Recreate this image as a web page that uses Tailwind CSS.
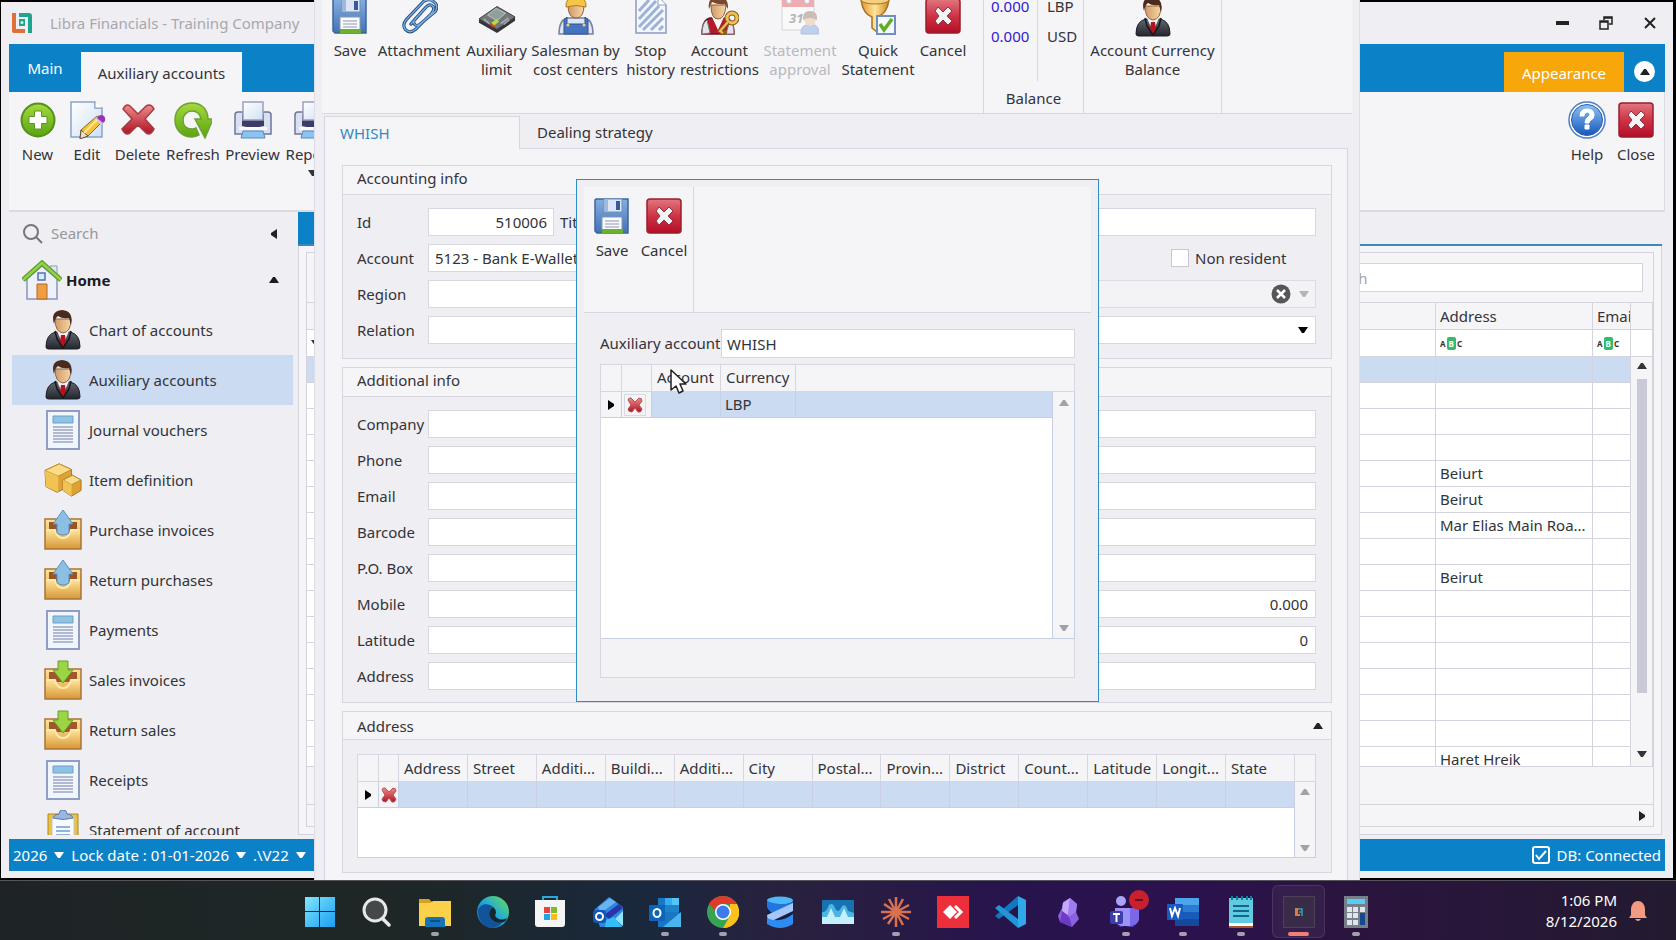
<!DOCTYPE html>
<html lang="en">
<head>
<meta charset="utf-8">
<title>Libra Financials - Training Company</title>
<script src="https://cdn.jsdelivr.net/npm/@tailwindcss/browser@4"></script>
</head>
<body class="h-screen overflow-hidden flex flex-col bg-black text-[15px] leading-[19px] text-[#333338] font-['Noto_Sans','Open_Sans',sans-serif]">

<!-- shared icon library -->
<svg class="absolute w-0 h-0" aria-hidden="true">
  <defs>
    <linearGradient id="gGreen" x1="0" y1="0" x2="0" y2="1"><stop offset="0" stop-color="#a5da3c"/><stop offset="1" stop-color="#5aa312"/></linearGradient>
    <linearGradient id="gRed" x1="0" y1="0" x2="0" y2="1"><stop offset="0" stop-color="#e0787f"/><stop offset=".5" stop-color="#cf3344"/><stop offset="1" stop-color="#b30d27"/></linearGradient>
    <linearGradient id="gX" x1="0" y1="0" x2="0" y2="1"><stop offset="0" stop-color="#f08a88"/><stop offset="1" stop-color="#ad1426"/></linearGradient>
    <linearGradient id="gBlue" x1="0" y1="0" x2="0" y2="1"><stop offset="0" stop-color="#85aee0"/><stop offset="1" stop-color="#4273b5"/></linearGradient>
    <linearGradient id="gPage" x1="0" y1="0" x2="1" y2="1"><stop offset="0" stop-color="#ffffff"/><stop offset="1" stop-color="#cfe0f4"/></linearGradient>
    <linearGradient id="gBox" x1="0" y1="0" x2="0" y2="1"><stop offset="0" stop-color="#ffe49a"/><stop offset="1" stop-color="#d99a3a"/></linearGradient>
    <linearGradient id="gSuit" x1="0" y1="0" x2="0" y2="1"><stop offset="0" stop-color="#62666f"/><stop offset="1" stop-color="#22252c"/></linearGradient>
    <linearGradient id="gSkin" x1="0" y1="0" x2="1" y2="0"><stop offset="0" stop-color="#cf9a68"/><stop offset="1" stop-color="#f8d6a6"/></linearGradient>
    <linearGradient id="gHelp" x1="0" y1="0" x2="0" y2="1"><stop offset="0" stop-color="#8fc2f2"/><stop offset="1" stop-color="#1458bd"/></linearGradient>
    <linearGradient id="gGold" x1="0" y1="0" x2="1" y2="0"><stop offset="0" stop-color="#e09a2e"/><stop offset=".5" stop-color="#ffe39a"/><stop offset="1" stop-color="#d08a20"/></linearGradient>
    <linearGradient id="gWin" x1="0" y1="0" x2="1" y2="1"><stop offset="0" stop-color="#7fe6ff"/><stop offset="1" stop-color="#1a9df0"/></linearGradient>
    <linearGradient id="gEdge" x1="0" y1="1" x2="1" y2="0"><stop offset="0" stop-color="#0c59a4"/><stop offset=".5" stop-color="#1fa8dc"/><stop offset="1" stop-color="#6be04e"/></linearGradient>
  </defs>
  <symbol id="up" viewBox="0 0 10 6"><path d="M0 6 4 0h2l4 6z" fill="currentColor"/></symbol>
  <symbol id="down" viewBox="0 0 10 6"><path d="M0 0h10L6 6H4z" fill="currentColor"/></symbol>
  <symbol id="left" viewBox="0 0 6 10"><path d="M6 0v10L0 6V4z" fill="currentColor"/></symbol>
  <symbol id="right" viewBox="0 0 6 10"><path d="M0 0v10l6-4V4z" fill="currentColor"/></symbol>
  <symbol id="logo" viewBox="0 0 22 22"><path d="M1 1h4v16h9v4H3q-2 0-2-2z" fill="#e0703a"/><path d="M8 1h10q3 0 3 3v17h-4V5H8z" fill="#1fa58e"/><path d="M8 7h6v7H8z" fill="#1fa58e"/><circle cx="11" cy="10.500" r="1.500" fill="#d9f0ec"/></symbol>
  <symbol id="new" viewBox="0 0 38 38"><circle cx="19" cy="19" r="16.500" fill="url(#gGreen)" stroke="#558f1c" stroke-width="2"/><path d="M15.500 10h7v5.500H28v7h-5.500V28h-7v-5.500H10v-7h5.500z" fill="#fff" stroke="#5c962a"/></symbol>
  <symbol id="edit" viewBox="0 0 38 38"><path d="M3 1h24v6h7v29H3z" fill="url(#gPage)" stroke="#8aa3c6" stroke-width="1.500"/><path d="M27 1v6h7" fill="#fff" stroke="#8aa3c6"/><path d="m12 37 1-8L29 15l6 5-15 15z" fill="#f5c33b" stroke="#8a6a28"/><path d="m13 29 7 6-8 3z" fill="#f2dcc0" stroke="#58504a"/><path d="m26 18 5-4 6 6-4 4z" fill="#c8cad8"/><path d="m30 15 3-1q5 0 4 6l-2 2-6-5z" fill="#9a32b8"/><path d="m16 32 13-13" stroke="#ffe89a" stroke-width="2"/></symbol>
  <symbol id="delete" viewBox="0 0 38 38"><path d="M4 8q3-6 7-3l8 8 8-8q5-3 8 3l-9 10 9 10q-3 7-8 4l-8-8-8 8q-5 3-8-4l10-10z" fill="url(#gX)" stroke="#a63a44" stroke-width="1.500"/></symbol>
  <symbol id="refresh" viewBox="0 0 38 38"><path d="M18 2C8 2 1 9 1 19s7 17 17 17q4 0 7-2l-3-7q-2 1-4 1c-6 0-9-4-9-9s4-9 9-9 8 3 9 8h-6l10 19 8-19h-5C34 8 27 2 18 2z" fill="url(#gGreen)" stroke="#6f9f35" stroke-width="1.500"/></symbol>
  <symbol id="printer" viewBox="0 0 38 38"><path d="M1 14q0-3 3-3h5v8h20v-8h5q3 0 3 3v19H1z" fill="#dbe0f1" stroke="#6e7699" stroke-width="1.500"/><path d="M8 14h22v11q-11 3-22 0z" fill="#3d3b67"/><path d="M9 1h20v18H9z" fill="url(#gPage)" stroke="#9b9fc0" stroke-width="1.500"/><path d="M5 26h28v3H5z" fill="#f8f9ff"/><path d="M9 30h20l2 7H7z" fill="#8bc4ee" stroke="#5f88bb"/></symbol>
  <symbol id="close" viewBox="0 0 38 38"><rect x="2" y="2" width="34" height="34" rx="3" fill="url(#gRed)" stroke="#9c1d2c" stroke-width="1.500"/><path d="m11 14 3-4 5 5 5-5 4 4-5 5 5 5-4 4-5-5-5 5-3-4 4-5z" fill="#f4f4f6" stroke="#8b3340" stroke-linejoin="round"/></symbol>
  <symbol id="help" viewBox="0 0 38 38"><circle cx="19" cy="19" r="18" fill="#fff" stroke="#4f7fc0" stroke-width="1.500"/><circle cx="19" cy="19" r="15.500" fill="url(#gHelp)" stroke="#2a62b0"/><path d="M12 15q0-7 7-7t7 6q0 4-3 5-2 1-2 3h-4q0-4 3-6 2-1 2-2 0-3-3-3-3 1-3 4zM17 24h4v4h-4z" fill="#fff" stroke="#fff"/></symbol>
  <symbol id="save" viewBox="0 0 38 38"><path d="M3 2h32v34H4l-2-2V3z" fill="url(#gBlue)" stroke="#3d659c" stroke-width="1.500"/><path d="M11 2h18v13H11z" fill="#dce5f3" stroke="#6f8fbe"/><path d="M23 4h4v9h-4z" fill="#38599c"/><path d="M11 3h4v11h-4z" fill="#9fb8de"/><path d="M9 20h20v13H9z" fill="#fafbff" stroke="#8296bb"/><path d="M12 24h14M12 27h14M12 30h14" stroke="#8c93ad"/><path d="M9 32h21v4H9z" fill="#6bb02f"/></symbol>
  <symbol id="clip" viewBox="0 0 42 38"><g fill="none" stroke-linecap="round"><path d="M12 28 29 9q4-4 7-1t-1 8L17 34q-6 5-11 0-4-5 1-11L26 3q6-4 11 0 6 4 2 11L22 28q-4 3-6 0-2-3 1-6L28 10" stroke="#27507f" stroke-width="3.500"/><path d="M12 28 29 9q4-4 7-1t-1 8L17 34q-6 5-11 0-4-5 1-11L26 3q6-4 11 0 6 4 2 11L22 28q-4 3-6 0-2-3 1-6L28 10" stroke="#79ace0" stroke-width="1.500"/></g></symbol>
  <symbol id="terminal" viewBox="0 0 40 38"><path d="M1 23 20 9l19 11v4L20 37 1 26z" fill="#34363a"/><path d="M1 22 20 9l19 11-19 13z" fill="#73767a" stroke="#44474b"/><path d="m10 18 9-7 10 5-9 8z" fill="#8fa09a" stroke="#bfc4bf"/><path d="m14 26 6-4 2 3-5 4z" fill="#aee03c"/><path d="m14 27 4 3-2 1-4-3z" fill="#e23c2c"/><path d="m6 22 6 5M24 27l8-6M27 28l6-5" stroke="#a9adb0" stroke-width="1.500"/></symbol>
  <symbol id="worker" viewBox="0 0 38 38"><path d="M2 37q0-14 8-16h18q8 2 8 16z" fill="#dfe5f1" stroke="#78839c" stroke-width="1.500"/><path d="M10 20v7h18v-7l3 3v14H7V23z" fill="#4674c0" stroke="#2f5598"/><circle cx="11" cy="28" r="1.500" fill="#f0d468"/><circle cx="27" cy="28" r="1.500" fill="#f0d468"/><path d="M11 8q0 13 8 13t8-13z" fill="url(#gSkin)" stroke="#8c5f3c"/><path d="M9 10q-1-10 10-10t10 10q-10-3-20 0z" fill="#f6c545" stroke="#b07e1d"/></symbol>
  <symbol id="page" viewBox="0 0 38 38"><path d="M4 0h22l8 8v28H4z" fill="#f4f7fd" stroke="#8d9bc0" stroke-width="1.500"/><path d="M7 14 17 3M7 22 24 4M7 30 27 9M11 33 31 13M19 33l12-12M27 33l4-4" stroke="#9db2d6" stroke-width="3"/><path d="M26 0v8h8" fill="#fff" stroke="#8d9bc0"/></symbol>
  <symbol id="keyman" viewBox="0 0 38 38"><path d="M1 37q0-14 8-16h16q8 2 8 16z" fill="#b4182b" stroke="#6c1420" stroke-width="1.500"/><path d="m11 20 6 13 6-13z" fill="#f7f4f4"/><path d="M1 37q0-11 5-14l3 13zM29 23q4 4 4 14h-8z" fill="#e4e4ea" stroke="#77777f"/><path d="M10 8q0 14 7 14t8-14z" fill="url(#gSkin)" stroke="#8c5f3c"/><path d="M8 12Q6 0 17-1q11 1 10 13l-3-5q-7 1-13-2z" fill="#7c472a"/><circle cx="31" cy="21" r="5" fill="none" stroke="#8b5d18" stroke-width="5"/><circle cx="31" cy="21" r="5" fill="none" stroke="#efc05a" stroke-width="3"/><path d="m27 25-8 9 3 3 3-3" fill="none" stroke="#8b5d18" stroke-width="4"/><path d="m27 25-8 9 3 2" fill="none" stroke="#efc05a" stroke-width="2"/></symbol>
  <symbol id="approve" viewBox="0 0 38 38"><g opacity=".4"><path d="M1 2h32v31H1z" fill="#fff" stroke="#a7a8b2"/><path d="M1 1h32v9H1z" fill="#e0404c"/><circle cx="8" cy="4" r="2.500" fill="#fff" stroke="#888"/><circle cx="26" cy="4" r="2.500" fill="#fff" stroke="#888"/><path d="M20 37q0-8 5-9h8q5 1 5 9z" fill="#6f9be0" stroke="#4f6fa8"/><path d="M23 20q0 9 6 9t6-9z" fill="#e8b888"/><path d="M22 23q-1-9 7-9t7 9q-7-4-14 0z" fill="#8f6b52"/></g><text x="8" y="26" font-size="13" font-style="italic" font-weight="700" fill="#b3b3bb">31</text></symbol>
  <symbol id="funnel" viewBox="0 0 38 38"><path d="M2 3q2 14 11 17v11l5 4V20Q28 17 30 3z" fill="url(#gGold)" stroke="#a87020" stroke-width="1.500"/><ellipse cx="16" cy="3" rx="14" ry="4" fill="#f5cf80" stroke="#a87020"/><path d="M18 19h18v18H18z" fill="#f5f8fd" stroke="#6f8fc2" stroke-width="2"/><path d="m21 27 4 6 8-11" fill="none" stroke="#5caf1f" stroke-width="3.500"/></symbol>
  <symbol id="man" viewBox="0 0 38 40"><path d="M2 37q0-13 10-15h14q10 2 10 15 0 2-3 2H5q-3 0-3-2z" fill="url(#gSuit)" stroke="#1c1e24"/><path d="m13 21 6 14 6-14z" fill="#f2f2f6"/><path d="m17 25h4l1 7-3 6-3-6z" fill="#b5121f"/><path d="m11 21 2 8 6 9M27 21l-2 8-6 9" stroke="#15171b" fill="none" stroke-width="1.500"/><path d="M11 9q0 13 8 14 8-1 8-14z" fill="url(#gSkin)" stroke="#94663f"/><path d="M10 14Q6 1 18 0q12 1 9 15l-2-7q-7 1-11-2-3 2-4 8z" fill="#4a2a1b"/></symbol>
  <symbol id="home" viewBox="0 0 40 40"><path d="M28 6h7v12h-7z" fill="#e3e8f6" stroke="#8d97bd"/><path d="M5 19 20 6l15 13v20H5z" fill="#eef1fa" stroke="#8a93bb" stroke-width="1.500"/><path d="M15 24h10v15H15z" fill="#ef9e45" stroke="#b06a22"/><path d="M16 13h7v7h-7z" fill="#d8ecff" stroke="#5470b0" stroke-width="1.500"/><path d="M1 20 20 3l19 17" fill="none" stroke="#5a9c28" stroke-width="5"/><path d="M1 20 20 3l19 17" fill="none" stroke="#93d24a" stroke-width="2.500"/></symbol>
  <symbol id="doc" viewBox="0 0 38 40"><path d="M3 1h32v38H3z" fill="#f1f5fc" stroke="#8f9cc4" stroke-width="2"/><path d="M9 6h20v7H9z" fill="#8ec3e4" stroke="#6ca0cb"/><path d="M9 17h20M9 20h20M9 23h20M9 26h20M9 29h20M9 32h20" stroke="#9aa4c4" stroke-width="1.500"/></symbol>
  <symbol id="boxes" viewBox="0 0 40 36"><path d="M1 8 16 1l13 6v16L14 31 2 25z" fill="#dca235" stroke="#a87522"/><path d="M1 8 16 1l13 6-14 7z" fill="#fbdc84" stroke="#b98a2e"/><path d="M15 14v17L2 25 1 8z" fill="#f1c355"/><path d="m20 18 10-5 9 5v11l-10 6-9-6z" fill="#dda236" stroke="#a87522"/><path d="m20 18 10-5 9 5-10 5z" fill="#fbdc84" stroke="#b98a2e"/><path d="M29 23v12l-9-6V18z" fill="#f1c355"/></symbol>
  <symbol id="outbox" viewBox="0 0 38 40"><path d="M1 9h36v30H1z" fill="url(#gBox)" stroke="#a8763a" stroke-width="1.500"/><path d="M5 12h28v10H5z" fill="#9a5426"/><path d="M2 20h9q2 8 8 8t8-8h9v18H2z" fill="url(#gBox)"/><path d="M2 20h9q2 8 8 8t8-8h9" fill="none" stroke="#ffe9ad" stroke-width="2"/><path d="m19 0 10 14h-4v9q-6 4-12 0v-9H9z" fill="#8bbfe4" stroke="#5b8fbd"/></symbol>
  <symbol id="inbox" viewBox="0 0 38 40"><path d="M1 9h36v30H1z" fill="url(#gBox)" stroke="#a8763a" stroke-width="1.500"/><path d="M5 12h28v10H5z" fill="#a0572a"/><path d="M2 20h9q2 8 8 8t8-8h9v18H2z" fill="url(#gBox)"/><path d="M2 20h9q2 8 8 8t8-8h9" fill="none" stroke="#ffe9ad" stroke-width="2"/><path d="M14 1h10v9h5L19 23 9 10h5z" fill="#9bd544" stroke="#669f2c"/></symbol>
  <symbol id="board" viewBox="0 0 38 40"><path d="M4 4h30v36H4z" fill="#edc13c" stroke="#a88a2b"/><path d="M8 8h22v32H8z" fill="#f7faff" stroke="#b9c3dc"/><path d="M12 17h14M12 21h14M12 25h14M12 29h14" stroke="#8fb4dc" stroke-width="2"/><path d="M9 8q1-4 6-4 0-4 4-4t4 4q5 0 6 4-10 3-20 0z" fill="#9cb7de" stroke="#5e7db0"/></symbol>
  <symbol id="rowx" viewBox="0 0 16 16"><path d="M1 3q1-3 3-2l4 4 4-4q3 0 3 3l-3 4 3 4q-1 4-4 3l-3-4-3 4q-4 0-4-3l3-4z" fill="url(#gX)" stroke="#b5544e"/></symbol>
</svg>

<div class="relative flex-1 min-h-0 overflow-hidden">

  <!-- application window -->
  <div class="absolute left-px right-[3px] top-0.5 bottom-0.5 bg-[#efeef3] px-2 pb-[7px] flex flex-col">
    <header class="h-[42px] shrink-0 flex items-center pl-0.5 pr-2">
      <svg class="w-[22px] h-[22px]"><use href="#logo"/></svg>
      <h1 class="ml-[17px] text-[#a9a8ad] flex-1">Libra Financials - Training Company</h1>
      <div class="flex items-center gap-[30px] text-[#222]">
        <button aria-label="Minimize"><svg class="w-[14px] h-[14px]" viewBox="0 0 14 14"><path d="M1 5h13v4H1z" fill="currentColor"/></svg></button>
        <button aria-label="Restore"><svg class="w-[14px] h-[14px]" viewBox="0 0 14 14" fill="none" stroke="currentColor" stroke-width="1.500"><path d="M5 4V1h8v7h-3M5 2h8M1 5h8v8H1zM1 6h8"/></svg></button>
        <button aria-label="Close window"><svg class="w-[14px] h-[14px]" viewBox="0 0 14 14" fill="none" stroke="currentColor" stroke-width="2"><path d="m2 2 10 10M12 2 2 12"/></svg></button>
      </div>
    </header>
    <nav class="h-12 shrink-0 bg-[#0b82c8] flex items-end text-white">
      <button class="w-[72px] h-12">Main</button>
      <button class="w-[161px] h-10 bg-[#f5f5f8] text-[#333338] pt-0.5">Auxiliary accounts</button>
      <div class="flex-1"></div>
      <button class="w-[120px] h-10 bg-[#f7a70a] pt-0.5">Appearance</button>
      <button class="w-[21px] h-[21px] mx-2.5 mb-[10px] rounded-full bg-white text-[#222] grid place-items-center" aria-label="Collapse ribbon"><svg class="w-2.5 h-1.5"><use href="#up"/></svg></button>
    </nav>
    <div class="h-[120px] shrink-0 bg-[#f5f5f8] border-b-2 border-r border-[#dcdbe1] flex pt-[9px] pl-1 pr-1 items-start">
      <button class="w-[49px] flex flex-col items-center gap-1.5"><svg class="w-[38px] h-[38px]"><use href="#new"/></svg>New</button>
      <button class="w-[50px] flex flex-col items-center gap-1.5"><svg class="w-[38px] h-[38px]"><use href="#edit"/></svg>Edit</button>
      <button class="w-[51px] flex flex-col items-center gap-1.5"><svg class="w-[38px] h-[38px]"><use href="#delete"/></svg>Delete</button>
      <button class="w-[60px] flex flex-col items-center gap-1.5"><svg class="w-[38px] h-[38px]"><use href="#refresh"/></svg>Refresh</button>
      <button class="w-[59px] flex flex-col items-center gap-1.5"><svg class="w-[38px] h-[38px]"><use href="#printer"/></svg>Preview</button>
      <button class="w-[62px] flex flex-col items-center gap-1.5"><svg class="w-[38px] h-[38px]"><use href="#printer"/></svg>Reports<svg class="w-2.5 h-1.5"><use href="#down"/></svg></button>
      <div class="flex-1"></div>
      <button class="w-[50px] flex flex-col items-center gap-1.5"><svg class="w-[38px] h-[38px]"><use href="#help"/></svg>Help</button>
      <button class="w-[48px] flex flex-col items-center gap-1.5"><svg class="w-[38px] h-[38px]"><use href="#close"/></svg>Close</button>
    </div>

    <div class="flex-1 min-h-0 flex">
      <aside class="w-[289px] shrink-0 overflow-hidden pl-[3px] pr-[5px] mb-1 flex flex-col">
        <div class="h-[43px] shrink-0 flex items-center pl-[11px] pr-4 text-[#222]">
          <svg class="w-5 h-5 text-[#77767b]" viewBox="0 0 20 20" fill="none" stroke="currentColor" stroke-width="2"><circle cx="8" cy="8" r="7"/><path d="m13 13 6 6"/></svg>
          <input type="search" placeholder="Search" aria-label="Search menu" class="ml-2 flex-1 min-w-0 bg-transparent placeholder:text-[#98979c] outline-none">
          <svg class="w-1.5 h-2.5"><use href="#left"/></svg>
        </div>
        <button class="h-[50px] shrink-0 flex items-center pl-2.5 pr-[14px] gap-1 font-bold text-[#1c1c1e]"><svg class="w-10 h-10"><use href="#home"/></svg><span class="flex-1 text-left">Home</span><svg class="w-2.5 h-1.5"><use href="#up"/></svg></button>
        <ul class="[&_a]:h-[50px] [&_a]:flex [&_a]:items-center [&_a]:pl-8 [&_a]:gap-[7px] [&_svg]:w-[38px] [&_svg]:h-10">
          <li><a href="#"><svg><use href="#man"/></svg>Chart of accounts</a></li>
          <li><a href="#" class="bg-[#cbdcf2]"><svg><use href="#man"/></svg>Auxiliary accounts</a></li>
          <li><a href="#"><svg><use href="#doc"/></svg>Journal vouchers</a></li>
          <li><a href="#"><svg><use href="#boxes"/></svg>Item definition</a></li>
          <li><a href="#"><svg><use href="#outbox"/></svg>Purchase invoices</a></li>
          <li><a href="#"><svg><use href="#outbox"/></svg>Return purchases</a></li>
          <li><a href="#"><svg><use href="#doc"/></svg>Payments</a></li>
          <li><a href="#"><svg><use href="#inbox"/></svg>Sales invoices</a></li>
          <li><a href="#"><svg><use href="#inbox"/></svg>Return sales</a></li>
          <li><a href="#"><svg><use href="#doc"/></svg>Receipts</a></li>
          <li><a href="#"><svg><use href="#board"/></svg>Statement of account</a></li>
        </ul>
      </aside>
      <main class="flex-1 min-w-0 flex flex-col pr-[3px] pb-1">
        <div class="h-[34px] shrink-0 border-b-2 border-[#3a88bd] flex"><button class="w-[160px] bg-[#0b82c8] text-white">Auxiliary accounts</button></div>
        <div class="flex-1 min-h-0 border border-t-0 border-[#d5d3de] bg-[#f5f5f8] pt-1.5 px-[7px] pb-[7px]">
          <div class="h-full border border-[#d5d3de] flex flex-col">
            <div class="flex justify-end p-2.5"><input type="search" placeholder="Search" aria-label="Search accounts" class="w-[328px] h-[29px] bg-white border border-[#d5d3de] px-1 placeholder:text-[#a5a4a9]"></div>
            <div class="h-[464px] shrink-0 overflow-hidden">
            <table class="w-full table-fixed border-separate border-spacing-0 bg-white text-left [&_td]:border-r [&_td]:border-b [&_td]:border-[#d5d3de] [&_td]:px-1 [&_td]:overflow-hidden [&_td]:whitespace-nowrap [&_th]:border-r [&_th]:border-b [&_th]:border-[#d5d3de] [&_th]:px-1 [&_th]:font-normal [&_th]:overflow-hidden [&_tbody_tr]:h-[26px]">
              <colgroup><col><col class="w-[157px]"><col class="w-[38px]"><col class="w-[22px]"></colgroup>
              <thead>
                <tr class="h-[28px] bg-[#f5f5f8]"><th class="border-t"></th><th class="border-t">Address</th><th class="border-t">Email</th><th class="border-t"></th></tr>
                <tr class="h-[27px]">
                  <th><svg class="w-2.5 h-1.5"><use href="#down"/></svg></th>
                  <th><span class="flex items-center gap-px text-[8px] leading-[13px] font-bold"><span>A</span><span class="bg-[#35b96b] text-white px-0.5 rounded-xs">B</span><span>C</span></span></th>
                  <th><span class="flex items-center gap-px text-[8px] leading-[13px] font-bold"><span>A</span><span class="bg-[#35b96b] text-white px-0.5 rounded-xs">B</span><span>C</span></span></th>
                  <th></th>
                </tr>
              </thead>
              <tbody>
                <tr><td class="bg-[#cbdcf2]"></td><td class="bg-[#cbdcf2]"></td><td class="bg-[#cbdcf2]"></td>
                  <td rowspan="16" class="bg-[#f5f5f8]"><div class="h-[394px] mb-2.5 flex flex-col items-center gap-2.5"><svg class="w-2.5 h-1.5"><use href="#up"/></svg><div class="w-2.5 h-[314px] bg-[#cac9d7]"></div><div class="flex-1"></div><svg class="w-2.5 h-1.5"><use href="#down"/></svg></div></td></tr>
                <tr><td></td><td></td><td></td></tr>
                <tr><td></td><td></td><td></td></tr>
                <tr><td></td><td></td><td></td></tr>
                <tr><td></td><td>Beiurt</td><td></td></tr>
                <tr><td></td><td>Beirut</td><td></td></tr>
                <tr><td></td><td>Mar Elias Main Roa...</td><td></td></tr>
                <tr><td></td><td></td><td></td></tr>
                <tr><td></td><td>Beirut</td><td></td></tr>
                <tr><td></td><td></td><td></td></tr>
                <tr><td></td><td></td><td></td></tr>
                <tr><td></td><td></td><td></td></tr>
                <tr><td></td><td></td><td></td></tr>
                <tr><td></td><td></td><td></td></tr>
                <tr><td></td><td></td><td></td></tr>
                <tr><td></td><td>Haret Hreik</td><td></td></tr>
              </tbody>
            </table>
            </div>
            <div class="flex-1 border-y border-[#d5d3de]"></div>
            <div class="h-[21px] shrink-0 flex items-center justify-end pr-2 text-[#222]"><svg class="w-1.5 h-2.5"><use href="#right"/></svg></div>
          </div>
        </div>
      </main>
    </div>
    <footer class="h-8 shrink-0 bg-[#0b82c8] text-white flex items-center px-1 gap-[7px]">
      <button class="flex items-center gap-[7px]">2026<svg class="w-2.5 h-1.5"><use href="#down"/></svg></button>
      <button class="flex items-center gap-[7px]">Lock date : 01-01-2026<svg class="w-2.5 h-1.5"><use href="#down"/></svg></button>
      <button class="flex items-center gap-[7px]">.\V22<svg class="w-2.5 h-1.5"><use href="#down"/></svg></button>
      <div class="flex-1"></div>
      <svg class="w-[18px] h-[18px]" viewBox="0 0 18 18" fill="none" stroke="currentColor" stroke-width="2"><rect x="1" y="1" width="16" height="16" rx="2"/><path d="m4 9 3 4 7-8"/></svg>
      <span>DB: Connected</span>
    </footer>
  </div>

  <!-- account window, dragged partly above the screen -->
  <div class="absolute left-[314px] right-[316px] -top-1 bottom-0 bg-[#efeef3] border-x border-[#dcdde8] px-[7px] flex flex-col">
    <div class="h-[118px] shrink-0 bg-[#f5f5f8] border-b border-[#d8d6e0] flex items-stretch pl-[5px] pt-px text-center">
      <div class="flex items-start w-[657px] border-r border-[#d8d6e0] [&_svg]:w-[38px] [&_svg]:h-[38px] [&_svg]:shrink-0 [&_button]:flex [&_button]:flex-col [&_button]:items-center [&_button]:gap-1.5">
        <button class="w-[46px]"><svg><use href="#save"/></svg>Save</button>
        <button class="w-[92px]"><svg><use href="#clip"/></svg>Attachment</button>
        <button class="w-[63px]"><svg><use href="#terminal"/></svg>Auxiliary<br>limit</button>
        <button class="w-[95px] whitespace-nowrap"><svg><use href="#worker"/></svg>Salesman by<br>cost centers</button>
        <button class="w-[55px]"><svg><use href="#page"/></svg>Stop<br>history</button>
        <button class="w-[83px]"><svg><use href="#keyman"/></svg>Account<br>restrictions</button>
        <button class="w-[78px] text-[#b9b8be]" disabled><svg><use href="#approve"/></svg>Statement<br>approval</button>
        <button class="w-[78px]"><svg><use href="#funnel"/></svg>Quick<br>Statement</button>
        <button class="w-[52px]"><svg><use href="#close"/></svg>Cancel</button>
      </div>
      <div class="w-[100px] border-r border-[#d8d6e0] flex flex-col justify-between pb-[5px]">
        <div class="h-[84px] flex text-left">
          <div class="w-[54px] border-r border-[#d8d6e0] pl-[7px] text-[#3120d0] flex flex-col gap-[11px]"><span>0.000</span><span>0.000</span></div>
          <div class="pl-[9px] flex flex-col gap-[11px]"><span>LBP</span><span>USD</span></div>
        </div>
        <span>Balance</span>
      </div>
      <button class="w-[138px] border-r border-[#d8d6e0] flex flex-col items-center justify-start gap-1 whitespace-nowrap"><svg class="w-[38px] h-10"><use href="#man"/></svg>Account Currency<br>Balance</button>
    </div>
    <div class="flex-1 min-h-0 flex flex-col pt-0.5 pl-0.5 pr-1">
      <div class="flex h-[33px] shrink-0 text-left">
        <button class="w-[196px] border border-b-0 border-[#d8d6e0] bg-[#f5f5f8] text-[#3487c4] text-left pl-[15px]">WHISH</button>
        <button class="flex-1 border-b border-[#d8d6e0] text-left pl-[17px]">Dealing strategy</button>
      </div>
      <div class="flex-1 min-h-0 border-x border-[#d8d6e0] bg-[#f5f5f8] pt-4 pl-[17px] pr-[15px] flex flex-col gap-2">
        <fieldset class="h-[194px] shrink-0 border border-[#d8d6e0] bg-[#efeef3]">
          <h2 class="h-[29px] bg-[#f5f5f8] border-b border-[#d8d6e0] pl-[14px] leading-6">Accounting info</h2>
          <div class="pl-[14px] pr-[15px] pt-[13px] flex flex-col gap-2 [&_input[type=text]]:bg-white [&_input[type=text]]:border [&_input[type=text]]:border-[#d8d6e0] [&_input[type=text]]:h-[28px] [&_input[type=text]]:px-1.5">
            <div class="flex items-center"><label for="fid" class="w-[71px]">Id</label><input id="fid" type="text" value="510006" class="w-[126px] text-right"><label for="ftitle" class="w-[60px] pl-1.5">Title</label><input id="ftitle" type="text" class="flex-1"></div>
            <div class="flex items-center"><label for="facc" class="w-[71px]">Account</label><input id="facc" type="text" value="5123 - Bank E-Wallet" class="w-[320px]"><div class="flex-1"></div><label class="flex items-center gap-1.5 w-[145px]"><input type="checkbox" class="appearance-none w-[18px] h-[18px] bg-white border border-[#c9c7d3]">Non resident</label></div>
            <div class="flex items-center"><label for="freg" class="w-[71px]">Region</label><input id="freg" type="text" class="w-[320px]"><div class="flex-1 ml-4 h-[28px] border border-[#dddce4] bg-[#f3f3f6] flex items-center justify-end gap-2 pr-1.5 text-[#b5b4ba]"><button aria-label="Clear"><svg class="w-5 h-5" viewBox="0 0 20 20"><circle cx="10" cy="10" r="9.500" fill="#55555a"/><path d="m6 6 8 8M14 6l-8 8" stroke="#fff" stroke-width="2.500"/></svg></button><svg class="w-2.5 h-1.5"><use href="#down"/></svg></div></div>
            <div class="flex items-center relative"><label for="frel" class="w-[71px]">Relation</label><select id="frel" class="flex-1 h-[28px] bg-white border border-[#d8d6e0] appearance-none"><option></option></select><svg class="absolute right-2 w-2.5 h-1.5 text-black pointer-events-none"><use href="#down"/></svg></div>
          </div>
        </fieldset>
        <fieldset class="h-[336px] shrink-0 border border-[#d8d6e0] bg-[#efeef3]">
          <h2 class="h-[29px] bg-[#f5f5f8] border-b border-[#d8d6e0] pl-[14px] leading-6">Additional info</h2>
          <div class="pl-[14px] pr-[15px] pt-[13px] flex flex-col gap-2 [&_label]:w-[71px] [&_div]:flex [&_div]:items-center [&_input]:flex-1 [&_input]:bg-white [&_input]:border [&_input]:border-[#d8d6e0] [&_input]:h-[28px] [&_input]:px-[7px]">
            <div><label for="f1">Company</label><input id="f1" type="text"></div>
            <div><label for="f2">Phone</label><input id="f2" type="text"></div>
            <div><label for="f3">Email</label><input id="f3" type="text"></div>
            <div><label for="f4">Barcode</label><input id="f4" type="text"></div>
            <div><label for="f5">P.O. Box</label><input id="f5" type="text"></div>
            <div><label for="f6">Mobile</label><input id="f6" type="text" value="0.000" class="text-right"></div>
            <div><label for="f7">Latitude</label><input id="f7" type="text" value="0" class="text-right"></div>
            <div><label for="f8">Address</label><input id="f8" type="text"></div>
          </div>
        </fieldset>
        <section class="h-[162px] shrink-0 border border-[#d8d6e0] bg-[#efeef3]">
          <h2 class="h-[28px] bg-[#f5f5f8] border-b border-[#d8d6e0] pl-[14px] pr-2 leading-6 flex items-center justify-between">Address<svg class="w-2.5 h-1.5 text-[#222]"><use href="#up"/></svg></h2>
          <div class="pl-[14px] pr-[15px] pt-[14px]">
            <table class="w-full table-fixed border-separate border-spacing-0 border-l border-t border-[#d8d6e0] text-left bg-white [&_th]:border-r [&_th]:border-b [&_th]:border-[#d8d6e0] [&_th]:font-normal [&_th]:px-[5px] [&_th]:whitespace-nowrap [&_td]:border-r [&_td]:border-b [&_td]:border-[#c9cfe2]">
              <colgroup><col class="w-[21px]"><col class="w-5"><col><col><col><col><col><col><col><col><col><col><col><col><col><col class="w-[21px]"></colgroup>
              <thead class="bg-[#f5f5f8]"><tr class="h-[27px]"><th></th><th></th><th>Address</th><th>Street</th><th>Additi...</th><th>Buildi...</th><th>Additi...</th><th>City</th><th>Postal...</th><th>Provin...</th><th>District</th><th>Count...</th><th>Latitude</th><th>Longit...</th><th>State</th><th></th></tr></thead>
              <tbody>
                <tr class="h-[26px] bg-[#cbdcf2]"><td class="bg-[#f5f5f8]"><svg class="w-1.5 h-2.5 mx-auto text-black"><use href="#right"/></svg></td><td class="bg-[#f5f5f8]"><button aria-label="Delete row" class="block mx-auto"><svg class="w-4 h-4"><use href="#rowx"/></svg></button></td><td></td><td></td><td></td><td></td><td></td><td></td><td></td><td></td><td></td><td></td><td></td><td></td><td></td>
                  <td rowspan="2" class="bg-[#f5f5f8]"><div class="h-[62px] flex flex-col items-center justify-between text-[#a2a1a6]"><svg class="w-2.5 h-1.5"><use href="#up"/></svg><svg class="w-2.5 h-1.5"><use href="#down"/></svg></div></td></tr>
                <tr class="h-[50px]"><td colspan="15"></td></tr>
              </tbody>
            </table>
          </div>
        </section>
      </div>
    </div>
  </div>

  <!-- currency dialog -->
  <div role="dialog" aria-label="Account Currency Balance" class="absolute left-[576px] right-[577px] top-[179px] h-[523px] bg-[#efeef3] border border-[#2f8cc4] px-[7px] pt-[7px] flex flex-col">
    <div class="h-[126px] shrink-0 bg-[#f5f5f8] border-b border-[#d8d6e0] flex">
      <div class="w-[110px] border-r border-[#d8d6e0] flex items-start pt-2.5 pl-[3px]">
        <button class="w-[50px] flex flex-col items-center gap-1.5"><svg class="w-[38px] h-[38px]"><use href="#save"/></svg>Save</button>
        <button class="w-[54px] flex flex-col items-center gap-1.5"><svg class="w-[38px] h-[38px]"><use href="#close"/></svg>Cancel</button>
      </div>
    </div>
    <div class="px-4 pt-4 flex flex-col">
      <div class="flex items-center"><label for="aux" class="w-[121px] whitespace-nowrap">Auxiliary account</label><input id="aux" type="text" value="WHISH" class="flex-1 min-w-0 h-[29px] bg-white border border-[#d8d6e0] px-[5px]"></div>
      <table class="mt-1.5 w-full table-fixed border-separate border-spacing-0 border-l border-t border-[#d8d6e0] bg-white text-left [&_th]:border-r [&_th]:border-b [&_th]:border-[#d8d6e0] [&_th]:font-normal [&_th]:px-[5px] [&_th]:pb-0.5 [&_td]:border-r [&_td]:border-b [&_td]:border-[#c9cfe2]">
        <colgroup><col class="w-[21px]"><col class="w-[30px]"><col class="w-[69px]"><col class="w-[75px]"><col><col class="w-[22px]"></colgroup>
        <thead class="bg-[#f5f5f8]"><tr class="h-[27px]"><th></th><th></th><th>Account</th><th>Currency</th><th colspan="2"></th></tr></thead>
        <tbody>
          <tr class="h-[26px] bg-[#cbdcf2]"><td class="bg-[#f5f5f8]"><svg class="w-1.5 h-2.5 mx-auto text-black"><use href="#right"/></svg></td><td class="bg-[#f5f5f8]"><button aria-label="Delete row" class="grid place-items-center ml-0.5 w-[22px] h-[22px] border border-[#d5d9e8]"><svg class="w-4 h-4"><use href="#rowx"/></svg></button></td><td></td><td class="pl-1">LBP</td><td></td>
            <td rowspan="2" class="bg-[#f5f5f8]"><div class="h-[231px] flex flex-col items-center justify-between text-[#a2a1a6]"><svg class="w-2.5 h-1.5"><use href="#up"/></svg><svg class="w-2.5 h-1.5"><use href="#down"/></svg></div></td></tr>
          <tr class="h-[221px]"><td colspan="5"></td></tr>
        </tbody>
      </table>
      <div class="h-[39px] border border-t-0 border-[#d8d6e0] bg-[#f3f3f6]"></div>
    </div>
  </div>

  <!-- mouse pointer -->
  <svg class="absolute left-[670px] top-[369px] w-[18px] h-[26px]" viewBox="0 0 18 26"><path d="M1 1v20l5-4 3 7 4-2-3-7h6z" fill="#fff" stroke="#222" stroke-width="1.500" stroke-linejoin="round"/></svg>
</div>

<!-- taskbar -->
<div class="relative h-[60px] shrink-0 border-t border-[#55545c] bg-[linear-gradient(90deg,#1e2425_0%,#1e2727_25%,#19283c_38%,#29213e_47%,#27144c_60%,#2c114f_70%,#2b143f_80%,#231a30_100%)] text-white">
  <div class="w-[1094px] mx-auto h-full flex [&_button]:flex-1 [&_button]:flex [&_button]:flex-col [&_button]:items-center [&_button]:pt-[15px] [&_button]:gap-1 [&_svg]:w-8 [&_svg]:h-8 [&_i]:w-2 [&_i]:h-1 [&_i]:rounded-full [&_i]:bg-[#a5a0ae]">
    <button aria-label="Start"><svg viewBox="0 0 32 32"><path d="M1 1h14v14H1zM16 1h15v14H16zM1 16h14v15H1zM16 16h15v15H16z" fill="url(#gWin)"/></svg></button>
    <button aria-label="Search"><svg viewBox="0 0 32 32"><circle cx="14" cy="14" r="11" fill="#44484b" stroke="#e6e8ea" stroke-width="3"/><path d="m22 23 6 6" stroke="#e6e8ea" stroke-width="3.500" stroke-linecap="round"/></svg></button>
    <button aria-label="File Explorer"><svg viewBox="0 0 32 32"><path d="M0 3h10l3 3h19v12H0z" fill="#d9a020"/><path d="M0 7h11l3-2h18v25H0z" fill="#fbd14b"/><path d="M6 31v-7q0-3 3-3h14q3 0 3 3v7z" fill="#1573b8"/><path d="M11 25h10" stroke="#0d4f88" stroke-width="2"/></svg><i></i></button>
    <button aria-label="Edge"><svg viewBox="0 0 32 32"><circle cx="16" cy="16" r="16" fill="url(#gEdge)"/><path d="M1 14C4 7 12 7 16 11q-4 3-3 9 2 9 13 6-5 6-12 6Q2 30 1 14z" fill="#12549c"/><path d="M16 11q-5 4-3 10 4 8 14 5 2-1 3-4-6 3-10 0-3-2-1-5 0-4-3-6z" fill="#19242c"/></svg></button>
    <button aria-label="Store"><svg viewBox="0 0 32 32"><path d="M9 6V1h14v5" fill="none" stroke="#2ba7dc" stroke-width="2"/><path d="M1 4h30v24q0 3-3 3H4q-3 0-3-3z" fill="#f5f5f5"/><path d="M10 11h6v6h-6z" fill="#e8453a"/><path d="M17 11h6v6h-6z" fill="#7cba2e"/><path d="M10 18h6v6h-6z" fill="#22a5e8"/><path d="M17 18h6v6h-6z" fill="#fbbb1c"/></svg></button>
    <button aria-label="Outlook new"><svg viewBox="0 0 32 32"><path d="M2 14 17 1l14 10v17q0 3-3 3H8z" fill="#2d86e0"/><path d="M6 11 18 2l6 4L9 17z" fill="#66b5f2"/><path d="M12 19 27 8l4 4-14 11z" fill="#2a35a8"/><path d="m31 15-8 8 8 7z" fill="#8fe6ff"/><path d="m14 24 8-3 8 10H13z" fill="#33bff5"/><rect x="1" y="14" width="13" height="13" rx="3" fill="#1158b5"/><circle cx="7.500" cy="20.500" r="3.500" fill="none" stroke="#fff" stroke-width="2"/></svg></button>
    <button aria-label="Outlook"><svg viewBox="0 0 32 32"><path d="M9 2h21v18H9z" fill="#1579c6"/><path d="M16 2h14v7H16z" fill="#37aeea"/><path d="M23 2h7v7h-7z" fill="#54c5f7"/><path d="M16 9h14v7H16z" fill="#1d83cc"/><path d="M9 17h23v14H9z" fill="#1b75c0"/><path d="m32 16-18 15h18z" fill="#48b5ec"/><rect y="9" width="16" height="16" rx="1" fill="#0c65b8"/><ellipse cx="8" cy="17" rx="3.500" ry="4" fill="none" stroke="#fff" stroke-width="2"/></svg><i></i></button>
    <button aria-label="Chrome"><svg viewBox="0 0 32 32"><circle cx="16" cy="16" r="16" fill="#36a552"/><path d="M2 8Q7 0 16 0t14 8H16q-7 0-8 7z" fill="#df3a2e"/><path d="M30 8q5 10-1 18-5 6-13 6l7-12V8z" fill="#fbc21d"/><circle cx="16" cy="16" r="8" fill="#fff"/><circle cx="16" cy="16" r="6.500" fill="#3d7bea"/></svg><i></i></button>
    <button aria-label="Database"><svg viewBox="0 0 32 32"><path d="M3 4v24q13 8 26 0V4z" fill="#191f3c"/><ellipse cx="16" cy="4.500" rx="13" ry="4" fill="#4db8f8"/><path d="M3 5q13 6 26 1v6L14 19Q4 16 3 11z" fill="#2374df"/><path d="m3 19 26-12v8L8 25q-5 0-5-6z" fill="#a3c7fa"/><path d="M3 22q13 6 26-4v10q-13 8-26 0z" fill="#2c8cf2"/></svg></button>
    <button aria-label="Performance monitor"><svg viewBox="0 0 32 32"><rect y="4" width="32" height="24" rx="1" fill="#1673b0"/><path d="M0 16q4 1 7-7 4-3 6 3 3 7 7-2 4-3 6 5l6 2v10H0z" fill="#4db4e4"/><path d="M0 21h5l4-9 4 9h5l4-9 4 9h6v7H0z" fill="#c4effc"/></svg></button>
    <button aria-label="Claude"><svg viewBox="0 0 32 32"><path d="M16 16 16 1M16 16 23 3M16 16 29 9M16 16 31 16M16 16 29 23M16 16 23 29M16 16 16 31M16 16 8 28M16 16 3 23M16 16 1 16M16 16 4 8M16 16 9 3" stroke="#d8714f" stroke-width="2.500"/></svg><i></i></button>
    <button aria-label="AnyDesk"><svg viewBox="0 0 32 32"><path d="M0 0h32v32H0z" fill="#ed2f3b"/><path d="m13 9 7 7-7 7-7-7z" fill="#fff"/><path d="m18 10 6 6-6 6" fill="none" stroke="#fff" stroke-width="3"/></svg></button>
    <button aria-label="VS Code"><svg viewBox="0 0 32 32"><path d="m23 0 8 4v24l-8 4z" fill="#31a8ea"/><path d="M23 0v9L4 23l-4-3z" fill="#1278bd"/><path d="M0 12l4-3 19 14v9z" fill="#2295d8"/></svg></button>
    <button aria-label="Obsidian"><svg viewBox="0 0 32 32"><path d="m18 2 7 6-1 8 3 7-7 8-12-5-2-6 4-8 1-6z" fill="#8b60e2"/><path d="m18 2-7 5-1 8 6 5z" fill="#c5a8f8"/><path d="m10 15 7 5 3 11-12-5z" fill="#6b3bc8"/><path d="m18 2 7 6-1 8-8 5z" fill="#9e7cf0"/></svg></button>
    <button aria-label="Teams" class="relative"><svg viewBox="0 0 32 32"><circle cx="11" cy="5" r="5" fill="#a8a4f8"/><path d="M17 12h12v12q-3 7-10 6z" fill="#7a68e8"/><path d="M5 12h15v18H11q-6-2-6-8z" fill="#9b93f8"/><path d="M6 28q8 6 20 0l-3 3H10z" fill="#5344c0"/><rect x="0" y="15" width="13" height="13" rx="2" fill="#3c3fa8"/><path d="M3 18h7M6.500 18v8" stroke="#fff" stroke-width="2"/></svg><i></i><b class="absolute top-[9px] right-1.5 w-5 h-5 rounded-full bg-[#c8202e] grid place-items-center"><span class="w-2 h-0.5 bg-[#6d101c]"></span></b></button>
    <button aria-label="Word"><svg viewBox="0 0 32 32"><path d="M8 2h24v8H8z" fill="#4ba4ec"/><path d="M8 9h24v7H8z" fill="#2b7cd3"/><path d="M8 16h24v7H8z" fill="#185abd"/><path d="M8 23h24v7H8z" fill="#154a9a"/><rect y="8" width="16" height="16" rx="1" fill="#185abd"/><path d="m3 12 2 8 3-8 3 8 2-8" fill="none" stroke="#fff" stroke-width="2"/></svg><i></i></button>
    <button aria-label="Notepad"><svg viewBox="0 0 32 32"><path d="M4 2h24v25H4z" fill="#5fcae0"/><path d="M4 27h24v3H4z" fill="#fff"/><path d="M4 30h24v2H4z" fill="#a6562a"/><path d="M8 10h16M8 15h16M8 20h16" stroke="#12678a" stroke-width="2"/><path d="M7 0v4M12 0v4M17 0v4M22 0v4M26 0v4" stroke="#1a7898" stroke-width="2"/></svg><i></i></button>
    <button aria-label="Libra Financials" class="relative"><span class="absolute top-1 left-0.5 right-0.5 bottom-0.5 rounded-md border border-white/10 bg-white/5"></span><svg viewBox="0 0 32 32"><path d="M.5.5h31v31H.5z" fill="#30203f" stroke="#46354f"/><path d="M13 12v7h4M14 12v6" stroke="#e0703a" stroke-width="2" fill="none"/><path d="M15 13h4v7M16 16h2" stroke="#1fa5a0" stroke-width="1.500" fill="none"/></svg><span class="w-[21px] h-1 rounded-full bg-[#ee7b6c]"></span></button>
    <button aria-label="Calculator"><svg viewBox="0 0 32 32"><path d="M4 0h24v32H4z" fill="#76808a"/><path d="M7 3h18v5H7z" fill="#57cdf3"/><path d="M7 11h5v5H7zM13 11h5v5h-5zM20 11h5v5h-5zM7 17h5v5H7zM13 17h5v5h-5zM7 24h5v5H7zM13 24h5v5h-5z" fill="#e2e6ea"/><path d="M20 17h5v12h-5z" fill="#15498c"/></svg><i></i></button>
  </div>
  <div class="absolute right-[29px] inset-y-0 flex items-center gap-3">
    <button class="text-right leading-[21px]">1:06 PM<br>8/12/2026</button>
    <svg class="w-[18px] h-5" viewBox="0 0 18 20"><path d="M2 14V8q1-8 7-8t7 8v6l2 3H0z" fill="#f49a82"/><path d="M6 18h6q-3 4-6 0z" fill="#f49a82"/></svg>
  </div>
</div>
</body>
</html>
